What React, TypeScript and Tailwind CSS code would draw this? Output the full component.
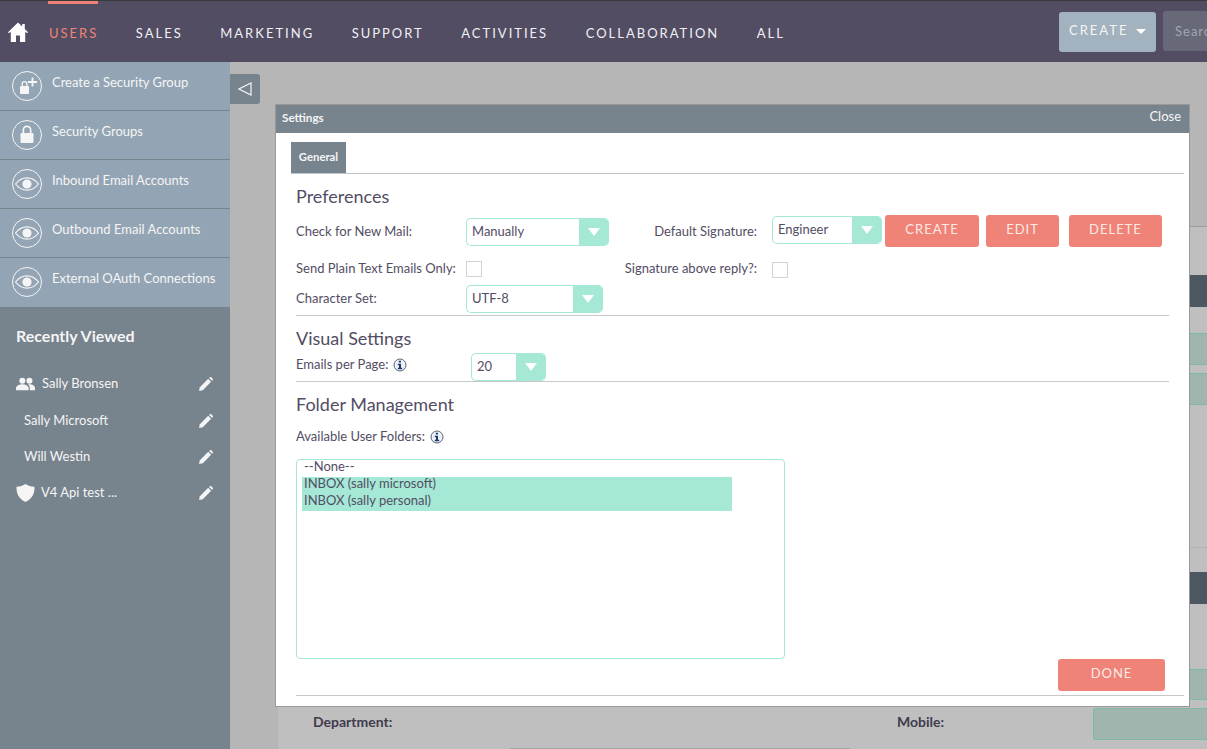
const navItems = ["SALES", "MARKETING", "SUPPORT", "ACTIVITIES", "COLLABORATION", "ALL"];

const CircleIcon = ({ kind }: { kind: "lockplus" | "lock" | "eye" }) => (
  <svg width="32" height="32" viewBox="0 0 32 32" className="shrink-0">
    <circle cx="16" cy="16" r="14.5" fill="none" stroke="#f5f5f5" strokeWidth="1" />
    {kind === "lockplus" && (
      <g fill="#f5f5f5">
        <rect x="9" y="16" width="9" height="8" rx="1" />
        <path d="M10.500 16v-2a3 3 0 0 1 6 0v2h-1.300v-2a1.700 1.700 0 0 0-3.400 0v2z" />
        <path d="M20.600 7.500h1.800v3.600H26v1.800h-3.600v3.600h-1.800v-3.600H17v-1.800h3.600z" />
      </g>
    )}
    {kind === "lock" && (
      <g fill="#f5f5f5">
        <rect x="9.500" y="14" width="13" height="10" rx="1" />
        <path d="M11.500 14v-3a4.500 4.500 0 0 1 9 0v3h-1.700v-3a2.800 2.800 0 0 0-5.600 0v3z" />
      </g>
    )}
    {kind === "eye" && (
      <g>
        <path d="M4.500 16C8 11.500 12 9.800 16 9.800s8 1.700 11.500 6.200C24 20.500 20 22.200 16 22.200S8 20.500 4.500 16z" fill="none" stroke="#f5f5f5" strokeWidth="1.200" />
        <circle cx="16" cy="16" r="4.600" fill="#f5f5f5" />
      </g>
    )}
  </svg>
);

const Pencil = () => (
  <svg width="14" height="14" viewBox="0 0 24 24" fill="#f5f5f5" className="shrink-0">
    <path d="M0 24l1.500-6.500L15.800 3.200l5 5L6.500 22.500z" />
    <path d="M17.400 1.600l1-1a2 2 0 0 1 2.800 0l2.200 2.200a2 2 0 0 1 0 2.800l-1 1z" />
  </svg>
);

const Info = () => (
  <svg width="14" height="14" viewBox="0 0 14 14" className="shrink-0">
    <circle cx="7" cy="7" r="6" fill="#eef1f6" stroke="#5f6672" strokeWidth="1" />
    <path d="M5.800 2.800h2.200v1.800H5.800zM4.800 5.800h3.200v4h1.200v1.400H4.800V9.800h1.200V7.200H4.800z" fill="#1d3a78" />
  </svg>
);

const Select = ({ value, width }: { value: string; width: string }) => (
  <div className={`flex h-[28px] ${width} overflow-hidden rounded-[5px] border border-r-0 border-[#a5e8d6] bg-white`}>
    <div className="flex-1 pl-[5px] text-[13px] leading-[24px] text-[#534d64]">{value}</div>
    <div className="flex w-[30px] items-center justify-center bg-[#a5e8d6]">
      <div className="h-0 w-0 border-x-[6px] border-t-[8px] border-x-transparent border-t-white"></div>
    </div>
  </div>
);

const RedButton = ({ label, width }: { label: string; width: string }) => (
  <div className={`flex h-[32px] ${width} items-center justify-center rounded-[3px] bg-[#f08377] pb-[3px] text-[13px] tracking-[1px] text-[#fbeae7]`}>
    {label}
  </div>
);

const Heading = ({ label, className }: { label: string; className: string }) => (
  <h2 className={`h-[24px] text-[18px] leading-[22px] text-[#534d64] ${className}`}>{label}</h2>
);

const sideLinks: { label: string; icon: "lockplus" | "lock" | "eye" }[] = [
  { label: "Create a Security Group", icon: "lockplus" },
  { label: "Security Groups", icon: "lock" },
  { label: "Inbound Email Accounts", icon: "eye" },
  { label: "Outbound Email Accounts", icon: "eye" },
  { label: "External OAuth Connections", icon: "eye" },
];

const GreenInput = ({ height }: { height: string }) => (
  <div className={`ml-auto ${height} w-[114px] rounded-l-[3px] border border-r-0 border-[#7fb8a6] bg-[#a1b5af]`}></div>
);

const App = () => {
  return (
    <div className="relative flex h-[749px] w-[1207px] flex-col overflow-hidden bg-[#b6b6b6] font-['Lato',sans-serif]">
      <header className="flex h-[62px] shrink-0 items-center border-t border-[#3a3a3a] bg-[#534d64]">
        <svg width="20" height="20" viewBox="0 0 20 20" fill="#ffffff" className="ml-[8px] shrink-0">
          <path d="M10 .5L0 10.200l1 1 1.800-1.600V20h5.200v-6.500h4V20h5.200V9.600L19 11.200l1-1-3.200-3.100V2h-2.600v2.600z" />
        </svg>
        <div className="relative mt-[4px] ml-[21px] text-[13px] tracking-[2px] text-[#f08377]">
          <div className="absolute -top-[23px] -left-[1px] h-[3px] w-[50px] bg-[#f08377]"></div>
          USERS
        </div>
        {navItems.map((item) => (
          <div key={item} className="mt-[4px] ml-[37.500px] text-[13px] tracking-[2px] text-[#f0f0f4]">{item}</div>
        ))}
        <div className="ml-auto flex h-[40px] w-[97px] items-center rounded-[3px] bg-[#a2b2bf] pb-[2px] pl-[10px] text-[13px] tracking-[2px] text-[#f5f5f5]">
          CREATE
          <div className="mt-[1px] ml-[8px] h-0 w-0 border-x-[5px] border-t-[5px] border-x-transparent border-t-white"></div>
        </div>
        <input
          placeholder="Search"
          className="-mt-[1px] ml-[7px] h-[40px] w-[44px] rounded-l-[3px] bg-[#676878] pb-[1px] pl-[12px] text-[13px] tracking-[1px] text-[#a4a5b4] outline-none placeholder:text-[#a4a5b4]"
        />
      </header>

      <div className="flex flex-1">
        <aside className="flex w-[230px] shrink-0 flex-col bg-[#77838d]">
          {sideLinks.map((link, i) => (
            <div
              key={link.label}
              className={`flex h-[49px] items-start bg-[#93a4b4] pt-[8px] pl-[11px] ${i < 4 ? "border-b border-[#77838d]" : ""}`}
            >
              <CircleIcon kind={link.icon} />
              <span className="mt-[3px] ml-[9px] text-[13px] leading-[18px] whitespace-nowrap text-[#f5f5f5]">{link.label}</span>
            </div>
          ))}
          <h3 className="mt-[19px] ml-[16px] h-[20px] text-[16px] leading-[20px] font-bold text-[#f5f5f5]">Recently Viewed</h3>
          <div className="mt-[20px] flex h-[36px] items-center pr-[17px] pl-[16px] text-[13px] text-[#f5f5f5]">
            <svg width="19" height="14" viewBox="0 0 24 16" fill="#f5f5f5" className="mr-[7px] shrink-0">
              <circle cx="8" cy="4" r="3.800" />
              <circle cx="17" cy="4" r="3.800" />
              <path d="M0 16v-3c0-3 5-4.800 8-4.800s8 1.800 8 4.800v3zM17.500 16v-3.200c0-1.600-.8-3-2.200-4.200.7-.2 1.300-.3 1.900-.3 3 0 6.800 1.800 6.800 4.800V16z" />
            </svg>
            <span>Sally Bronsen</span>
            <span className="ml-auto"><Pencil /></span>
          </div>
          <div className="flex h-[36px] items-center pt-[2px] pr-[17px] pl-[24px] text-[13px] text-[#f5f5f5]">
            <span>Sally Microsoft</span>
            <span className="ml-auto"><Pencil /></span>
          </div>
          <div className="flex h-[36px] items-center pt-[2px] pr-[17px] pl-[24px] text-[13px] text-[#f5f5f5]">
            <span>Will Westin</span>
            <span className="ml-auto"><Pencil /></span>
          </div>
          <div className="flex h-[36px] items-center pt-[2px] pr-[17px] pl-[16px] text-[13px] text-[#f5f5f5]">
            <svg width="19" height="18" viewBox="0 0 19 18" fill="#f5f5f5" className="mr-[6px] shrink-0">
              <path d="M9.500 0c2.400 1.600 5.400 2.600 9 2.800.3 6.800-2.400 12-9 15.200C2.900 14.800.2 9.600.5 2.800 4.100 2.600 7.100 1.600 9.500 0z" />
            </svg>
            <span>V4 Api test ...</span>
            <span className="ml-auto"><Pencil /></span>
          </div>
        </aside>

        <main className="flex flex-1 flex-col items-start">
          <div className="mt-[12px] flex h-[30px] w-[30px] items-center justify-center rounded-r-[3px] bg-[#77838d]">
            <svg width="14" height="14" viewBox="0 0 14 14" fill="none" stroke="#f5f5f5" strokeWidth="1.200">
              <path d="M13 1v12L1 7z" />
            </svg>
          </div>
          <section className="mt-[122px] ml-[48px] w-[929px] flex-1 border-t border-[#9b9b9b] bg-[#bfbfbf]">
            <div className="mt-[48px] h-[32px] bg-[#4d5761]"></div>
            <div className="mt-[26px]"><GreenInput height="h-[32px]" /></div>
            <div className="mt-[8px]"><GreenInput height="h-[32px]" /></div>
            <div className="mt-[142px] h-px bg-[#b3b3b3]"></div>
            <div className="mt-[24px] h-[32px] bg-[#4d5761]"></div>
            <div className="mt-[65px]"><GreenInput height="h-[31px]" /></div>
            <div className="mt-[8px] flex items-center text-[14px] font-bold text-[#403b4d]">
              <span className="mb-[6px] ml-[35px] w-[584px]">Department:</span>
              <span className="mb-[6px]">Mobile:</span>
              <GreenInput height="h-[32px]" />
            </div>
            <div className="mt-[8px] ml-[232px] h-px w-[340px] bg-[#a3a3a3]"></div>
          </section>
        </main>
      </div>

      <div className="absolute top-[104px] left-[275px] flex h-[603px] w-[915px] flex-col border border-[#999999] bg-white">
        <div className="flex h-[28px] shrink-0 items-start justify-between bg-[#77838d] pr-[8px] pl-[6px] text-[#f5f5f5]">
          <span className="mt-[4px] text-[11.700px] leading-[16px] font-bold">Settings</span>
          <span className="mt-[2px] text-[13px] leading-[18px]">Close</span>
        </div>
        <div className="mt-[9px] mr-[5px] ml-[15px] border-b border-[#bcc5cc]">
          <div className="flex h-[31px] w-[55px] items-center justify-center bg-[#77838d] text-[11.300px] font-bold text-[#f5f5f5]">General</div>
        </div>
        <div className="ml-[20px] flex flex-1 flex-col text-[13px] text-[#534d64]">
          <Heading label="Preferences" className="mt-[11px]" />
          <div className="mt-[6px] flex h-[32px] items-start">
            <div className="mt-[3px] flex h-[28px] w-[170px] items-center">Check for New Mail:</div>
            <div className="mt-[3px]"><Select value="Manually" width="w-[143px]" /></div>
            <div className="mt-[3px] flex h-[28px] w-[148px] items-center justify-end">Default Signature:</div>
            <div className="mt-[1px] ml-[15px]"><Select value="Engineer" width="w-[110px]" /></div>
            <div className="ml-[3px]"><RedButton label="CREATE" width="w-[94px]" /></div>
            <div className="ml-[7px]"><RedButton label="EDIT" width="w-[73px]" /></div>
            <div className="ml-[10px]"><RedButton label="DELETE" width="w-[93px]" /></div>
          </div>
          <div className="mt-[14px] flex h-[17px] items-start leading-[15px]">
            <div className="w-[170px]">Send Plain Text Emails Only:</div>
            <div className="h-[16px] w-[16px] border border-[#cdd5db] bg-white"></div>
            <div className="ml-[15px] w-[260px] text-right">Signature above reply?:</div>
            <div className="mt-[1px] ml-[15px] h-[16px] w-[16px] border border-[#cdd5db] bg-white"></div>
          </div>
          <div className="mt-[7px] flex h-[28px] items-center">
            <div className="w-[170px]">Character Set:</div>
            <Select value="UTF-8" width="w-[137px]" />
          </div>
          <div className="mt-[2px] h-px w-[873px] bg-[#c8c8c8]"></div>
          <Heading label="Visual Settings" className="mt-[11px]" />
          <div className="mt-[2px] flex h-[28px] items-start">
            <div className="mt-[2px] flex h-[20px] w-[175px] items-center gap-[5px]">
              <span>Emails per Page:</span>
              <Info />
            </div>
            <Select value="20" width="w-[75px]" />
          </div>
          <div className="h-px w-[873px] bg-[#c8c8c8]"></div>
          <Heading label="Folder Management" className="mt-[11px]" />
          <div className="mt-[10px] flex h-[20px] items-center gap-[5px]">
            <span>Available User Folders:</span>
            <Info />
          </div>
          <div className="mt-[12px] h-[200px] w-[489px] rounded-[4px] border border-[#a5e8d6] px-[5px] text-[13px] leading-[13px] text-[#534d64]">
            <div className="h-[17px] pl-[2px]">--None--</div>
            <div className="h-[17px] w-[430px] bg-[#a5e8d6] pl-[2px]">INBOX (sally microsoft)</div>
            <div className="h-[17px] w-[430px] bg-[#a5e8d6] pl-[2px]">INBOX (sally personal)</div>
          </div>
          <div className="mr-[24px] ml-auto">
            <RedButton label="DONE" width="w-[107px]" />
          </div>
          <div className="mt-[4px] h-px w-[888px] bg-[#c8c8c8]"></div>
        </div>
      </div>
    </div>
  );
};

export default App;
